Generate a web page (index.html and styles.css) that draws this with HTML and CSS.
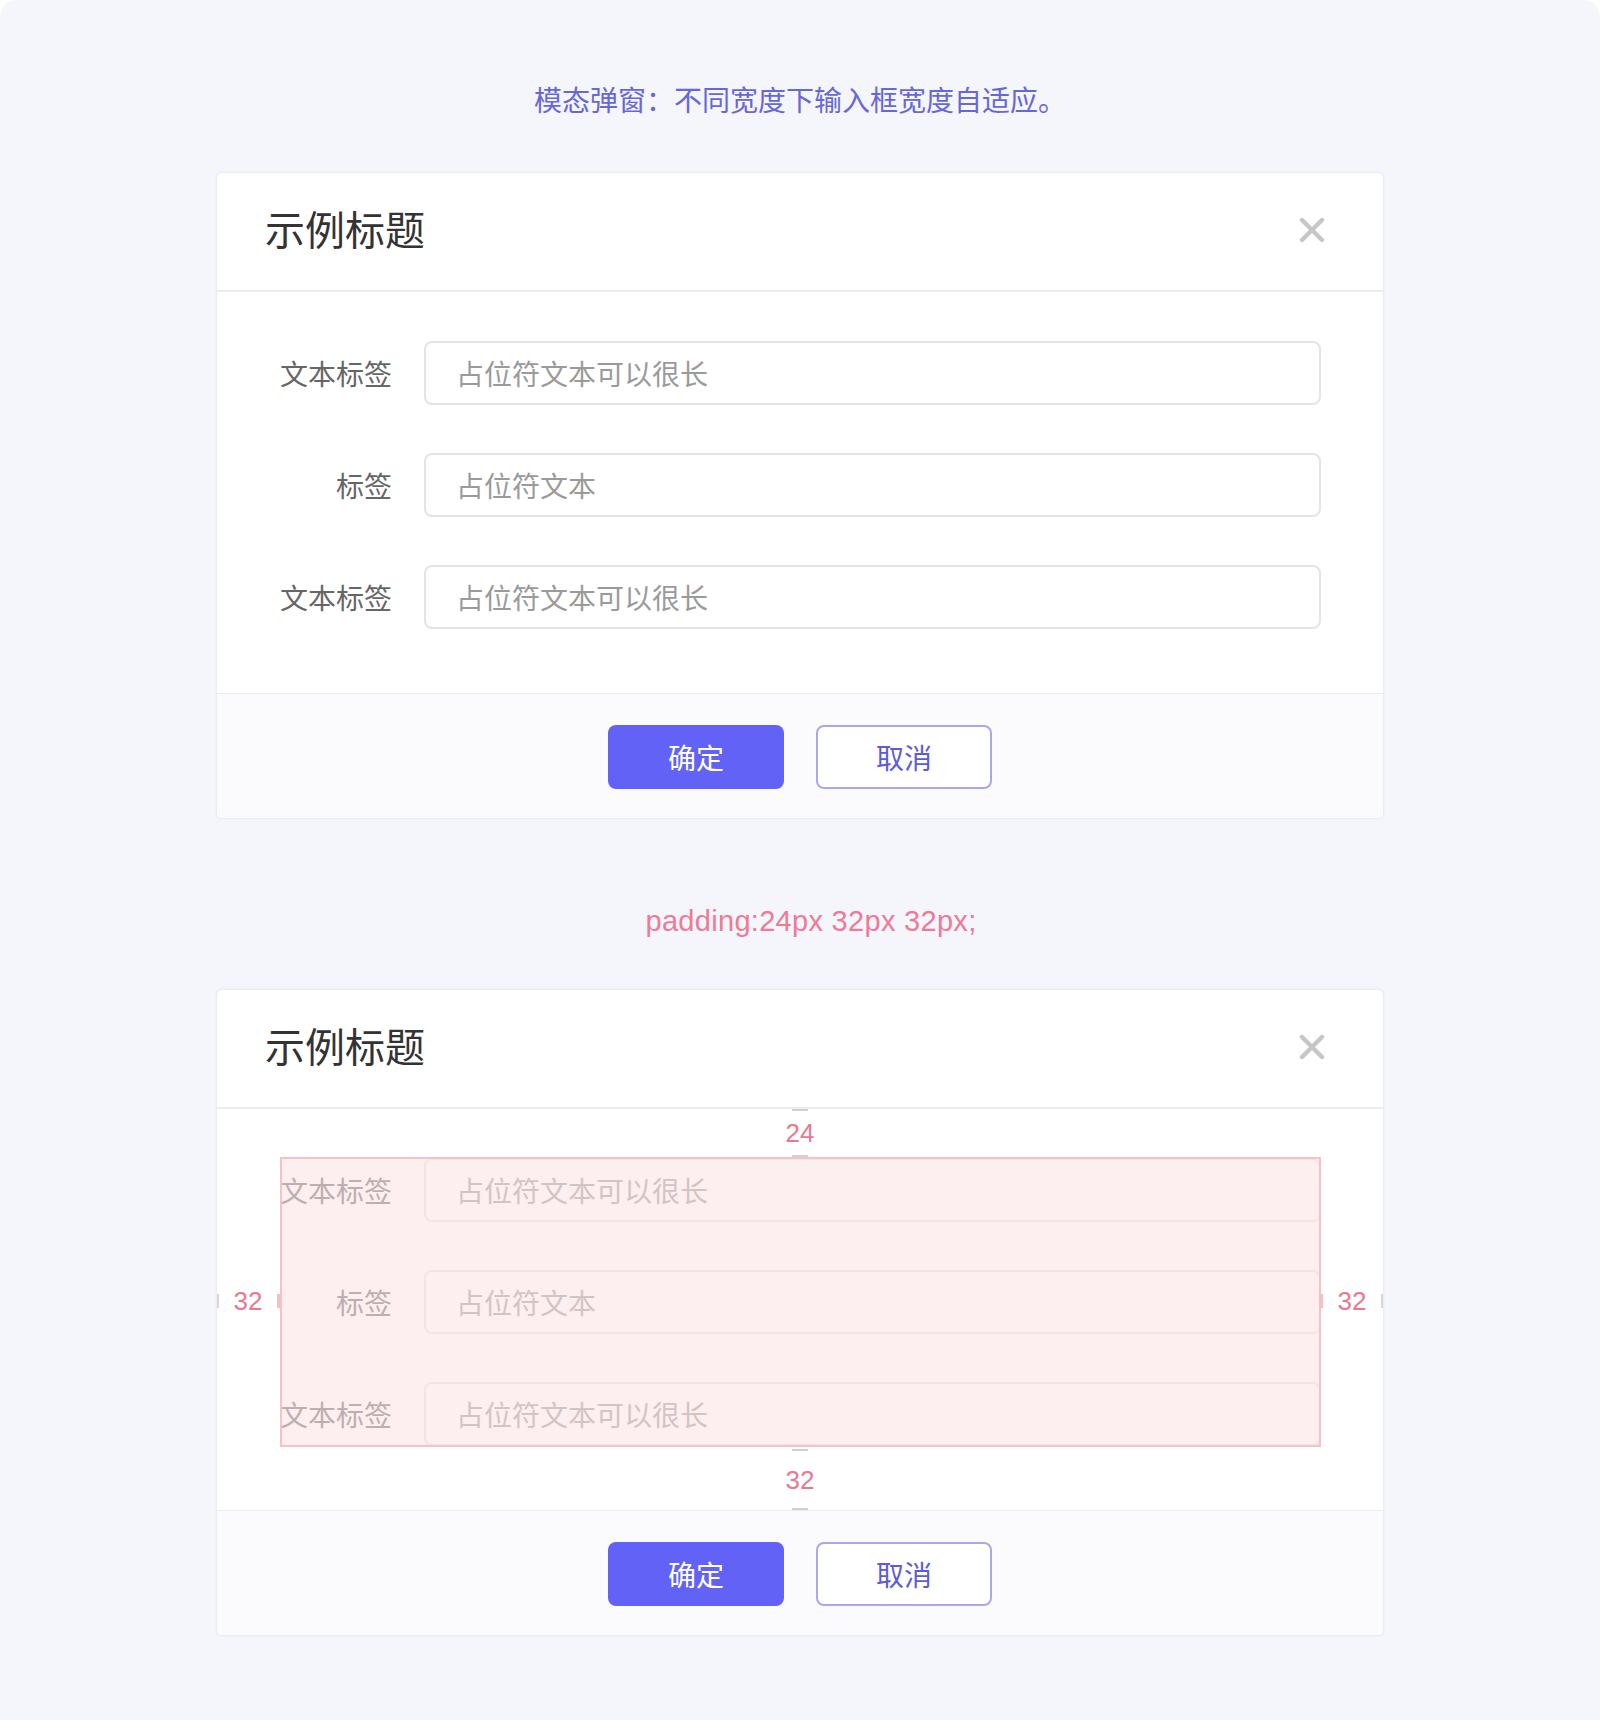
FILE: index.html
```html
<!DOCTYPE html>
<html lang="zh-CN">
<head>
<meta charset="utf-8">
<title>模态弹窗</title>
<link rel="stylesheet" href="styles.css">
</head>
<body>
<div class="page">
  <p class="caption">模态弹窗：不同宽度下输入框宽度自适应。</p>

  <div class="modal">
    <div class="modal-header">
      <h2 class="modal-title">示例标题</h2>
      <svg class="close" width="26" height="26" viewBox="0 0 26 26"><path d="M3 3 L23 23 M23 3 L3 23" stroke="#c6c6c6" stroke-width="4.4" stroke-linecap="round"/></svg>
    </div>
    <div class="modal-body">
      <div class="form-row"><label class="form-label">文本标签</label><div class="input">占位符文本可以很长</div></div>
      <div class="form-row"><label class="form-label">标签</label><div class="input">占位符文本</div></div>
      <div class="form-row"><label class="form-label">文本标签</label><div class="input">占位符文本可以很长</div></div>
    </div>
    <div class="modal-footer">
      <button class="btn btn-primary">确定</button>
      <button class="btn btn-default">取消</button>
    </div>
  </div>

  <p class="note">padding:24px 32px 32px;</p>

  <div class="modal">
    <div class="modal-header">
      <h2 class="modal-title">示例标题</h2>
      <svg class="close" width="26" height="26" viewBox="0 0 26 26"><path d="M3 3 L23 23 M23 3 L3 23" stroke="#c6c6c6" stroke-width="4.4" stroke-linecap="round"/></svg>
    </div>
    <div class="modal-body annotated">
      <div class="form-row"><label class="form-label">文本标签</label><div class="input">占位符文本可以很长</div></div>
      <div class="form-row"><label class="form-label">标签</label><div class="input">占位符文本</div></div>
      <div class="form-row"><label class="form-label">文本标签</label><div class="input">占位符文本可以很长</div></div>

      <div class="overlay"></div>
      <div class="dim dim-top"><span class="tick-h"></span><span class="dim-text">24</span><span class="tick-h"></span></div>
      <div class="dim dim-bottom"><span class="tick-h"></span><span class="dim-text">32</span><span class="tick-h"></span></div>
      <div class="dim dim-left"><span class="tick-v"></span><span class="dim-text">32</span><span class="tick-v pink"></span></div>
      <div class="dim dim-right"><span class="tick-v pink"></span><span class="dim-text">32</span><span class="tick-v"></span></div>
    </div>
    <div class="modal-footer">
      <button class="btn btn-primary">确定</button>
      <button class="btn btn-default">取消</button>
    </div>
  </div>
</div>
</body>
</html>
```

FILE: styles.css
```css
* { box-sizing: border-box; }

html, body {
  margin: 0;
  padding: 0;
  background: #ffffff;
}

body {
  font-family: "Noto Sans CJK SC", "Noto Sans", sans-serif;
}

.page {
  width: 1600px;
  min-height: 1720px;
  background: #f5f5fc;
  border-radius: 16px 16px 0 0;
  padding-top: 81px;
  overflow: hidden;
}

.caption {
  margin: 0 0 55px;
  text-align: center;
  font-size: 28px;
  line-height: 36px;
  color: #6767d8;
}

.note {
  margin: 82px 0 48px;
  padding-left: 22px;
  text-align: center;
  font-family: "Liberation Sans", Arial, sans-serif;
  font-size: 29px;
  letter-spacing: 0.3px;
  line-height: 40px;
  color: #ee7b96;
}

.modal {
  width: 1168px;
  margin: 0 auto;
  background: #ffffff;
  border: 1px solid #ececf1;
  border-radius: 6px;
  box-shadow: 0 0 2px rgba(220, 220, 235, 0.6);
  overflow: hidden;
}

.modal-header {
  height: 119px;
  display: flex;
  align-items: center;
  justify-content: space-between;
  padding: 0 58px 0 48px;
  border-bottom: 2px solid #ececf1;
}

.modal-title {
  margin: 0 0 8px;
  font-size: 40px;
  font-weight: 400;
  line-height: 56px;
  color: #333333;
}

.close {
  display: block;
  margin-bottom: 4px;
}

.modal-body {
  position: relative;
  padding: 49px 62px 64px 63px;
  display: flex;
  flex-direction: column;
  gap: 48px;
}

.form-row {
  display: flex;
  align-items: center;
}

.form-label {
  width: 112px;
  margin-right: 32px;
  flex: none;
  text-align: right;
  font-size: 28px;
  line-height: 40px;
  color: #666666;
  white-space: nowrap;
}

.input {
  flex: 1;
  height: 64px;
  border: 2px solid #e4e4e8;
  border-radius: 8px;
  padding-left: 30px;
  display: flex;
  align-items: center;
  font-size: 28px;
  color: #9a9a9a;
  background: #ffffff;
}

.modal-footer {
  background: #fbfbfe;
  border-top: 1px solid #ececf1;
  padding: 31px 0 29px;
  display: flex;
  justify-content: center;
  gap: 32px;
}

.btn {
  width: 176px;
  height: 64px;
  border-radius: 8px;
  font-family: "Noto Sans CJK SC", "Noto Sans", sans-serif;
  font-size: 28px;
  line-height: 1;
  cursor: pointer;
  padding: 0;
}

.btn-primary {
  background: #6262f6;
  border: none;
  color: #ffffff;
}

.btn-default {
  background: #ffffff;
  border: 2px solid #aba7ec;
  color: #5c5cd8;
}

/* annotation layer */
.overlay {
  position: absolute;
  top: 48px;
  left: 63px;
  right: 62px;
  bottom: 63px;
  background: rgba(251, 226, 228, 0.58);
  border: 2px solid #f6c2ca;
}

.dim {
  position: absolute;
  display: flex;
  align-items: center;
  justify-content: space-between;
}

.dim-text {
  font-family: "Liberation Sans", Arial, sans-serif;
  font-size: 26px;
  line-height: 28px;
  color: #e8798f;
}

.dim-top {
  top: 0;
  left: 0;
  right: 0;
  margin: 0 auto;
  width: 64px;
  height: 48px;
  flex-direction: column;
}

.dim-bottom {
  bottom: 0;
  left: 0;
  right: 0;
  margin: 0 auto;
  width: 64px;
  height: 63px;
  flex-direction: column;
  padding: 2px 0 0;
}

.tick-h {
  width: 16px;
  height: 2px;
  background: #d6cfd2;
}

.dim-left,
.dim-right {
  top: 178px;
  width: 64px;
  height: 28px;
}

.dim-left { left: -1px; }
.dim-right { right: -1px; }

.tick-v {
  width: 3px;
  height: 14px;
  background: #d9d4d6;
}

.tick-v.pink {
  background: #f3bfc8;
}
```
